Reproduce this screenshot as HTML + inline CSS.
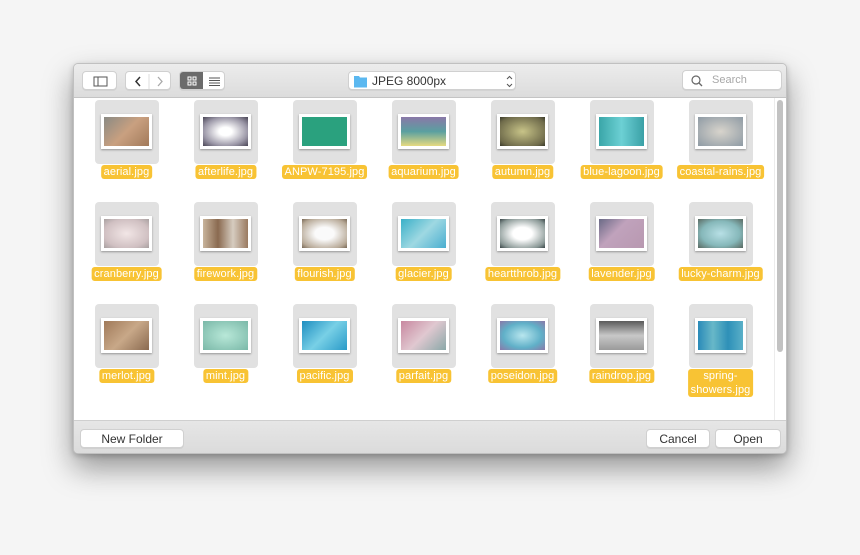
<!DOCTYPE html><html><head><style>
body{margin:0;width:860px;height:555px;background:#f5f5f5;font-family:"Liberation Sans",sans-serif;position:relative;overflow:hidden}
.win{position:absolute;left:73px;top:63px;width:714px;height:391px;background:#ececec;border:1px solid #c0c0c0;border-radius:5px;box-shadow:0 14px 30px rgba(0,0,0,.4),0 2px 6px rgba(0,0,0,.2);box-sizing:border-box;overflow:hidden}
.tb{position:absolute;left:0;top:0;width:100%;height:33px;background:linear-gradient(#ececec,#dcdcdc);border-bottom:1px solid #c4c4c4}
.btn{position:absolute;background:#fff;border:1px solid #d0d0d0;border-radius:4px;box-sizing:border-box;box-shadow:0 1px 0 rgba(0,0,0,.05)}
.content{position:absolute;left:0;top:34px;width:712px;height:322px;background:#fff}
.bb{position:absolute;left:0;top:356px;width:100%;height:35px;background:linear-gradient(#e6e6e6,#dadada);border-top:1px solid #cfcfcf}
.tile{position:absolute;width:64px;height:64px;background:#e1e1e1;border-radius:4px}
.fr{position:absolute;left:6px;top:14px;width:51px;height:35px;background:#fff;box-shadow:0 1px 2px rgba(0,0,0,.35);box-sizing:border-box;padding:3px}
.fr div{width:100%;height:100%}
.lb{position:absolute;font-size:11px;color:#fff;background:#f8c334;border-radius:3px;padding:0 3px;line-height:14px;text-align:center;white-space:nowrap;transform:translateX(-50%);letter-spacing:.1px}
.bt{position:absolute;font-size:12px;color:#333;text-align:center;line-height:18px}
</style></head><body>
<div class="win">
<div class="tb">
<div class="btn" style="left:8px;top:7px;width:35px;height:19px"><svg width="35" height="19"><rect x="11" y="5" width="13" height="9" fill="none" stroke="#555"/><line x1="15" y1="5" x2="15" y2="14" stroke="#555"/></svg></div>
<div class="btn" style="left:51px;top:7px;width:46px;height:19px"><svg width="46" height="19"><path d="M14 5l-4 4.5 4 4.5" fill="none" stroke="#333" stroke-width="1.5"/><line x1="23" y1="2" x2="23" y2="17" stroke="#ddd"/><path d="M32 5l4 4.5-4 4.5" fill="none" stroke="#aaa" stroke-width="1.3"/></svg></div>
<div class="btn" style="left:105px;top:7px;width:46px;height:19px;overflow:hidden"><div style="position:absolute;left:0;top:0;width:23px;height:19px;background:#6b6b6b"></div><svg width="46" height="19" style="position:absolute;left:0;top:0"><g fill="none" stroke="#fff"><rect x="8" y="5" width="3" height="3"/><rect x="13" y="5" width="3" height="3"/><rect x="8" y="10" width="3" height="3"/><rect x="13" y="10" width="3" height="3"/></g><g stroke="#555"><line x1="29" y1="6" x2="40" y2="6"/><line x1="29" y1="8.5" x2="40" y2="8.5"/><line x1="29" y1="11" x2="40" y2="11"/><line x1="29" y1="13.5" x2="40" y2="13.5"/></g></svg></div>
<div class="btn" style="left:274px;top:7px;width:168px;height:19px"><svg width="168" height="19" style="position:absolute;left:0;top:0"><path d="M5 4h5l1 1.5h7v10H5z" fill="#5bb8f0"/><path d="M158 7l2.5-2.5 2.5 2.5M158 12l2.5 2.5 2.5-2.5" fill="none" stroke="#555"/></svg><span style="position:absolute;left:23px;top:2px;font-size:12px;color:#333">JPEG 8000px</span></div>
<div class="btn" style="left:608px;top:6px;width:100px;height:20px"><svg width="20" height="20" style="position:absolute;left:4px;top:0"><circle cx="9" cy="9" r="4" fill="none" stroke="#666" stroke-width="1.2"/><line x1="12" y1="12" x2="15" y2="15" stroke="#666" stroke-width="1.3"/></svg><span style="position:absolute;left:29px;top:3px;font-size:11px;color:#a8a8a8">Search</span></div>
</div>
<div class="content">
<div style="position:absolute;left:703px;top:2px;width:6px;height:252px;background:#c2c2c2;border-radius:3px"></div>
<div style="position:absolute;left:700px;top:0;width:1px;height:322px;background:#ececec"></div>
</div>
<div class="bb">
<div class="btn bt" style="left:6px;top:8px;width:104px;height:19px">New Folder</div>
<div class="btn bt" style="left:572px;top:8px;width:64px;height:19px">Cancel</div>
<div class="btn bt" style="left:641px;top:8px;width:66px;height:19px">Open</div>
</div>
</div>
<div id="g"></div>
<script>
var d=[["aerial.jpg","linear-gradient(135deg,#8a8a84,#c9a080 50%,#a27a5a)"],["afterlife.jpg","radial-gradient(#fff 20%,#9a96a6 70%,#4a4656)"],["ANPW-7195.jpg","#2aa17e"],["aquarium.jpg","linear-gradient(#8a78a8,#5aa0a0 50%,#e6da80)"],["autumn.jpg","radial-gradient(#c8c488,#6e6a4a 80%,#3a3a2a)"],["blue-lagoon.jpg","linear-gradient(90deg,#3aa6a8,#6cd0d4,#3aa0a6)"],["coastal-rains.jpg","radial-gradient(#d8d4cc,#8e9aa4)"],
["cranberry.jpg","radial-gradient(#f2e6e6,#d0c0c2 70%,#a8a0a0)"],["firework.jpg","linear-gradient(90deg,#c8b49c,#8a6a50,#d6ccc0,#9a7a60)"],["flourish.jpg","radial-gradient(#fafafa 30%,#b8aa98 80%,#7a6a58)"],["glacier.jpg","linear-gradient(135deg,#3ab0c8,#9ed8e2,#4aaed0)"],["heartthrob.jpg","radial-gradient(#fff 30%,#8a9896 80%,#3a4648)"],["lavender.jpg","linear-gradient(135deg,#6a6a86,#c0a2bc 40%,#b898b0)"],["lucky-charm.jpg","radial-gradient(#b8e0e6,#86b8ba 60%,#5a6a62)"],
["merlot.jpg","linear-gradient(135deg,#a07a5a,#c8a888,#8a6a50)"],["mint.jpg","radial-gradient(#b8e8d8,#7ab8a8)"],["pacific.jpg","linear-gradient(135deg,#1e8ec0,#78d0e6,#2a9ac8)"],["parfait.jpg","linear-gradient(135deg,#c888a0,#e0c8d0,#8aa8a8)"],["poseidon.jpg","radial-gradient(#b8e6ee,#60b0c8 60%,#8a78a8)"],["raindrop.jpg","linear-gradient(#5a5a5a,#c8c8c8 50%,#9a9a9a)"],["spring-showers.jpg","linear-gradient(90deg,#2a8ab8,#68b8c8,#2e90b8,#5ab0c8)"]];
var h="";d.forEach(function(t,i){var c=i%7,r=Math.floor(i/7);var cx=126+c*99,y=100+r*102;
h+='<div class="tile" style="left:'+(cx-31)+'px;top:'+y+'px"><div class="fr"><div style="background:'+t[1]+'"></div></div></div>';
var n=t[0]=="spring-showers.jpg"?"spring-<br>showers.jpg":t[0];
h+='<div class="lb" style="left:'+(cx+0.5)+'px;top:'+(y+65)+'px">'+n+'</div>';});
document.getElementById("g").innerHTML=h;
</script>
</body></html>
